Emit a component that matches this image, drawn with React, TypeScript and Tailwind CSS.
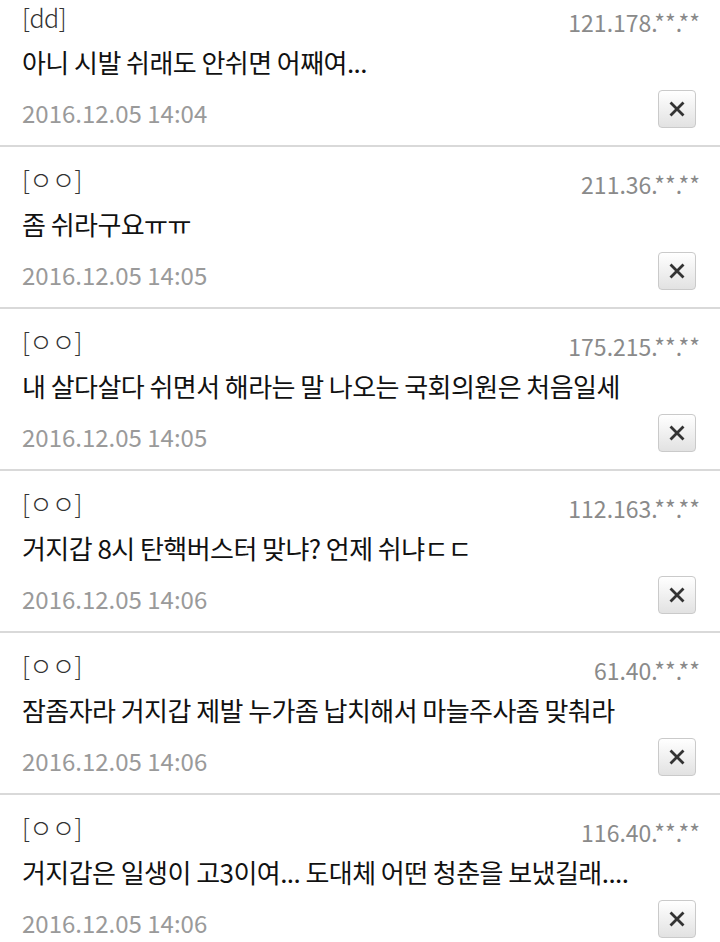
import React from 'react';

interface Comment {
  id: number;
  name: string;
  ip: string;
  text: string;
  date: string;
}

const COMMENTS: Comment[] = [
  { id: 1, name: '[dd]', ip: '121.178.**.**', text: '아니 시발 쉬래도 안쉬면 어째여...', date: '2016.12.05 14:04' },
  { id: 2, name: '[ㅇㅇ]', ip: '211.36.**.**', text: '좀 쉬라구요ㅠㅠ', date: '2016.12.05 14:05' },
  { id: 3, name: '[ㅇㅇ]', ip: '175.215.**.**', text: '내 살다살다 쉬면서 해라는 말 나오는 국회의원은 처음일세', date: '2016.12.05 14:05' },
  { id: 4, name: '[ㅇㅇ]', ip: '112.163.**.**', text: '거지갑 8시 탄핵버스터 맞냐? 언제 쉬냐ㄷㄷ', date: '2016.12.05 14:06' },
  { id: 5, name: '[ㅇㅇ]', ip: '61.40.**.**', text: '잠좀자라 거지갑 제발 누가좀 납치해서 마늘주사좀 맞춰라', date: '2016.12.05 14:06' },
  { id: 6, name: '[ㅇㅇ]', ip: '116.40.**.**', text: '거지갑은 일생이 고3이여... 도대체 어떤 청춘을 보냈길래....', date: '2016.12.05 14:06' },
];

const CloseIcon = () => (
  <svg width="16" height="16" viewBox="0 0 16 16" fill="none">
    <path d="M2.5 2.5L13.5 13.5M13.5 2.5L2.5 13.5" stroke="#333" strokeWidth="2.8" strokeLinecap="square" />
  </svg>
);

const CommentItem: React.FC<{ comment: Comment }> = ({ comment }) => (
  <li className="h-[162px] border-b-2 border-[#d9d9d9] px-[22px] pt-[14px]">
    <div className="flex h-[36px] items-end justify-between">
      <span className="text-[25px] font-light leading-[36px] tracking-[-0.5px] text-[#333]">{comment.name}</span>
      <span className="mr-[-2px] text-[23px] leading-[26px] text-[#8a8a8a]">{comment.ip}</span>
    </div>
    <p className="mt-[9px] text-[26px] leading-[36px] tracking-[-0.55px] text-[#111]">{comment.text}</p>
    <div className="mt-[10px] flex items-end justify-between">
      <span className="text-[24px] leading-[30px] text-[#9a9a9a]">{comment.date}</span>
      <button className="mr-[2px] flex h-[38px] w-[38px] items-center justify-center rounded-[4px] border border-[#cacaca] bg-gradient-to-b from-white to-[#e2e2e2]">
        <CloseIcon />
      </button>
    </div>
  </li>
);

export default function App() {
  return (
    <div className="h-[942px] w-[720px] overflow-hidden bg-white" style={{ fontFamily: '"Noto Sans CJK KR", "Noto Sans", sans-serif' }}>
      <ul className="-mt-[15px]">
        {COMMENTS.map(c => (
          <CommentItem key={c.id} comment={c} />
        ))}
      </ul>
    </div>
  );
}
